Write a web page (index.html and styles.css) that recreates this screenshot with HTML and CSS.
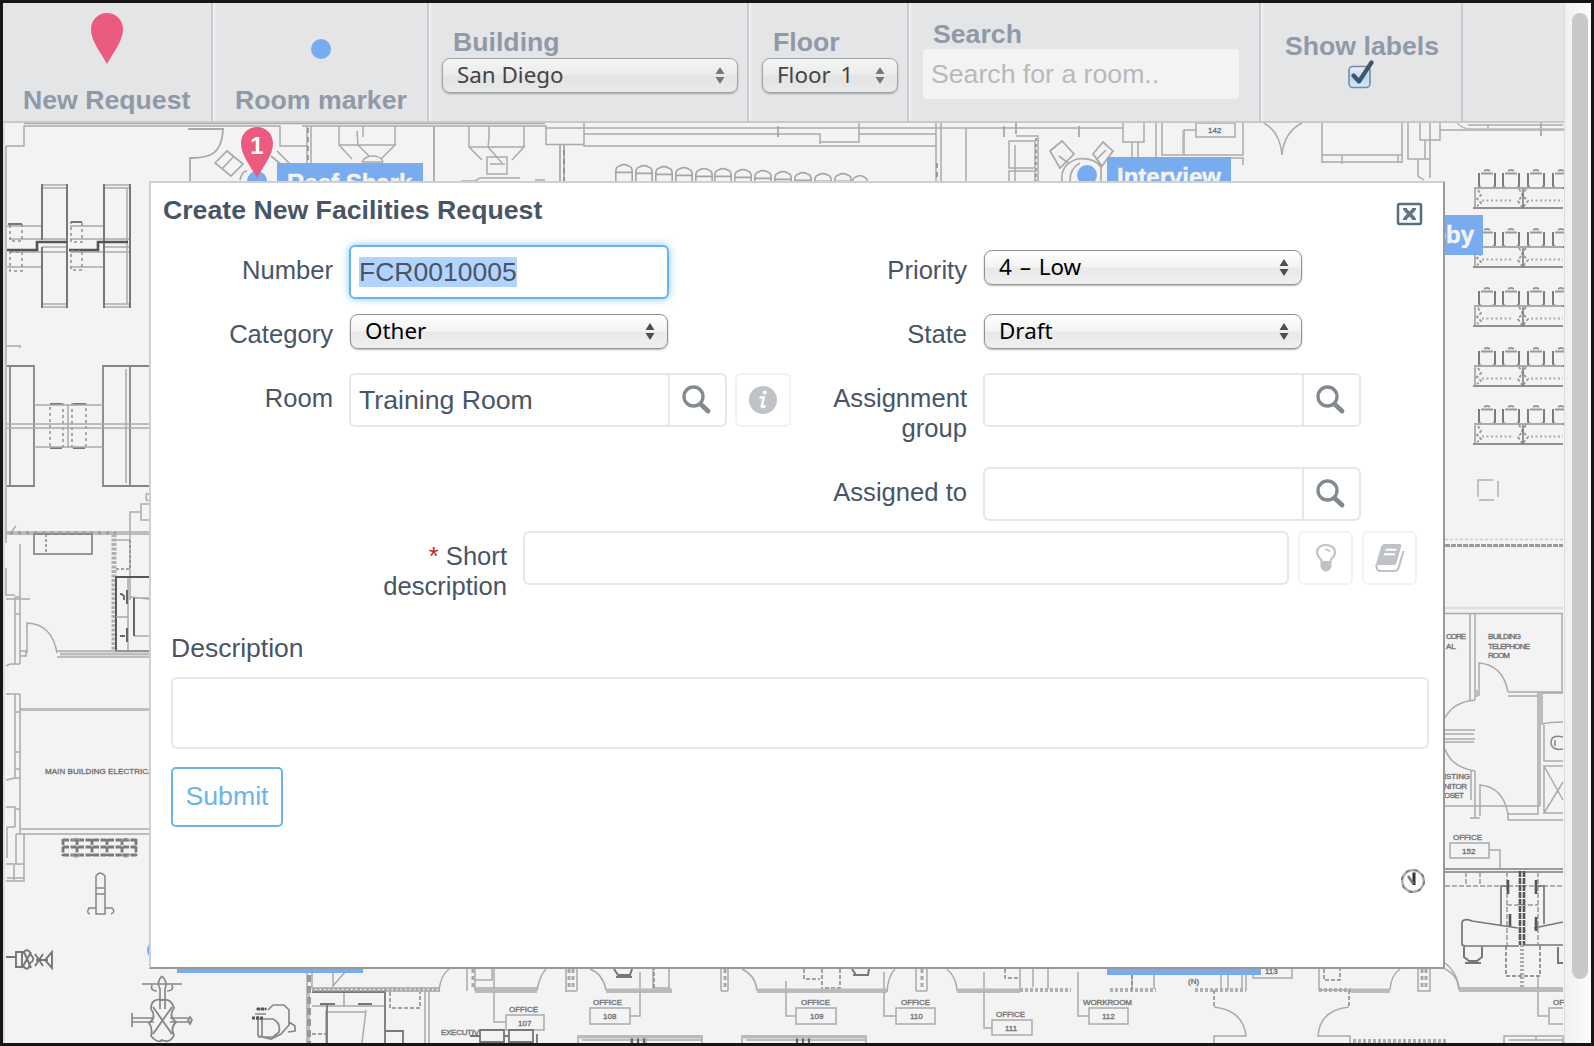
FILE: index.html
```html
<!DOCTYPE html>
<html lang="en">
<head>
<meta charset="utf-8">
<title>Facilities Map</title>
<link rel="stylesheet" href="styles.css">
</head>
<body>
<svg class="defs" width="0" height="0">
  <defs>
    <symbol id="pin" viewBox="0 0 32 51"><path d="M16 0C25 0 32 7 32 16.500C32 28 22 40 16 51C10 40 0 28 0 16.500C0 7 7 0 16 0Z" fill="#ea5b7f"/></symbol>
    <symbol id="arrows" viewBox="0 0 10 17"><path d="M5 0L9.500 7H.5ZM5 17L.5 10H9.500Z" fill="currentColor"/></symbol>
    <symbol id="search" viewBox="0 0 30 30"><circle cx="11.500" cy="11.500" r="9.500" fill="none" stroke="#828990" stroke-width="3.300"/><path d="M19 19.500L26 26" stroke="#828990" stroke-width="4.800" stroke-linecap="round"/></symbol>
    <symbol id="seat" viewBox="0 0 18 20" overflow="visible"><path d="M1 4V16Q1 19 4 19H14Q17 19 17 16V4" fill="none" stroke="#7c7c7c" stroke-width="2"/><path d="M3 4.500H15M6 2Q9 0 12 2" fill="none" stroke="#999" stroke-width="1.800"/></symbol>
    <symbol id="row" viewBox="0 0 90 42" overflow="visible">
      <use href="#seat" x="5" y="0" width="18" height="20"/><use href="#seat" x="29" y="0" width="18" height="20"/><use href="#seat" x="54" y="0" width="18" height="20"/><use href="#seat" x="79" y="0" width="18" height="20"/>
      <path d="M90 19H2V39" fill="none" stroke="#aaa" stroke-width="1.800"/><path d="M0 39H90" stroke="#909090" stroke-width="2.200"/>
      <path d="M9 31.500H40M58 31.500H90" stroke="#aaa" stroke-width="2" stroke-dasharray="2 2.500"/>
      <path d="M5 21L8 26L4 30L8 34L4 37M46 20L50 26L45 32L49 38M53 20L49 26L55 32L50 38" fill="none" stroke="#999" stroke-width="1.800" stroke-dasharray="3 2"/><path d="M50 20V39" stroke="#777" stroke-width="1.500"/>
    </symbol>
    <symbol id="roundseat" viewBox="0 0 22 26" overflow="visible"><path d="M2 25V8Q2 3 6 2Q11 -1 16 2Q20 3 20 8V25M2 9H20" fill="none" stroke="#a5a5a5" stroke-width="1.800"/></symbol>
  </defs>
</svg>
<div class="window">
  <div class="page">
    <header class="toolbar">
      <div class="cell cell-request"><svg class="pin" width="32" height="51"><use href="#pin"/></svg><span>New Request</span></div>
      <div class="cell cell-marker"><i class="dot"></i><span>Room marker</span></div>
      <div class="cell cell-building"><span>Building</span><div class="select"><b>San Diego</b><svg width="10" height="17"><use href="#arrows"/></svg></div></div>
      <div class="cell cell-floor"><span>Floor</span><div class="select"><b>Floor 1</b><svg width="10" height="17"><use href="#arrows"/></svg></div></div>
      <div class="cell cell-search"><span>Search</span><div class="searchbox">Search for a room..</div></div>
      <div class="cell cell-labels"><span>Show labels</span>
        <svg class="check" width="28" height="30" viewBox="0 0 28 30"><defs><linearGradient id="cb" x2="0" y2="1"><stop stop-color="#eaf2f9"/><stop offset=".5" stop-color="#b8d8f2"/><stop offset="1" stop-color="#cfeafc"/></linearGradient></defs><rect x="2" y="6.500" width="21" height="21" rx="4" fill="url(#cb)" stroke="#7d8a9b" stroke-width="1.600"/><path d="M6.500 15.500L12 21.500L24.500 2.500" fill="none" stroke="#42546a" stroke-width="4.200" stroke-linecap="round" stroke-linejoin="round"/></svg>
      </div>
    </header>
    <main class="map">
      <svg class="plan" viewBox="3 123 1561 920" width="1561" height="920">
        <rect x="3" y="123" width="2" height="920" fill="#dedede"/>
        <g fill="none" stroke="#aaa" stroke-width="1.500">
          <!-- north wall -->
          <path d="M6 146H24V126H280V146H307M24 123.500H545M545 128H936V146H584V129M302 126H546V144.500H584V123M584 134H820V144M820 142H859V123M859 134H936M936 123V181M941 123V181M966 128V181M936 128H1005M859 128H936"/>
          <path d="M307 126V181M311 126V181M339 126V145L352 159M339 145H395L381 159M395 126V145M357 131L358 145L369 156M363 126V137M469 126V147L482 160M469 147H524L512 160M524 126V147M489 126V139L488 147L502 163"/>
          <path d="M188 129H223Q222 150 210 155Q203 158 190 158V181M434 126V181M560 144V181M564 144V181" stroke-width="1.800"/>
          <path d="M362 162Q365 156 373 156Q381 156 383 162M362 162H383M487 157H507V174H487ZM490 164H505M461 181H475L480 178H520M535 180H545"/>
          <path d="M215 163L227 151L243 164L231 176ZM222 169L234 156M271 156L288 170M277 151L290 164M240 180Q242 171 247 171" stroke-width="1.700"/>
          <path d="M308 128V181M564 150V181M937 163V181" stroke="#888" stroke-dasharray="5 4"/>
          <path d="M778 126V137M1004 126V137M1079 126V137M1016 123V134M1541 123V136" stroke="#999"/>
          <path d="M1009 141H1035V168H1009ZM1009 181V171H1035V181M1016 136H1038V181M1015 145V181"/>
          <path d="M1036 138V181" stroke-dasharray="3 3" stroke="#888"/>
          <path d="M1050 151L1062 141L1074 154L1060 168ZM1093 154L1103 142L1113 151L1102 166ZM1059 156L1068 163M1096 160L1106 150M1062 181Q1060 165 1077 159Q1094 157 1101 167V181M1070 181Q1070 168 1080 163" stroke-width="1.700"/>
          <path d="M1005 128H1123V142H1144V123M1123 123V142M1132 142V158M1138 142V158M1156 123V157M1162 123V155H1243V123M1162 158H1243V165M1184 155V130H1196M1196 123H1235V137H1196ZM1264 123Q1280 132 1282 155Q1284 132 1302 123M1322 123V163M1322 155H1402V163M1322 162H1402M1342 156V164M1398 156V162M1402 123V155M1408 123V159H1430V123M1420 123V140H1440V130H1564M1440 123V140M1430 140V178M1425 140V159M1418 160V176L1424 180M1468 125H1563M1488 125V131"/>
          <path d="M1183 130V155M1457 123Q1462 128 1468 129H1564" stroke="#bbb"/>
          <!-- upper west desks -->
          <path d="M6 146V543M7 226H42M7 267H42M70 226H104M70 267H104M9 239H67M9 252H67M70 239H129M70 252H129M42 185H67M42 188H67M42 307H67M42 304H67M104 185H129M104 188H129M104 304H129M104 307H129M127 188V305M6 346H20V348M42 247H67M104 247H129"/>
          <path d="M42 184V240M42 247V308M67 184V308M104 184V308M130 184V308" stroke="#777" stroke-width="2"/>
          <path d="M7 250H37V242H67M69 250H98V242H128" stroke="#555" stroke-width="2.600"/>
          <path d="M10 224H22V241H10ZM10 252H22V271H10ZM71 222H82V242H71ZM71 251H82V270H71ZM50 404H63V448H50ZM72 404H86V448H72Z" stroke="#909090" stroke-dasharray="3 3"/>
          <path d="M8 224H22M71 222H82M50 404H62M73 404H85M50 448H62M73 448H85" stroke="#777" stroke-width="2"/>
          <path d="M7 366H34V486H7M149 366H103V486H149M10 366V486M130 366V486" stroke="#858585" stroke-width="1.800"/>
          <path d="M7 424H149M7 428H149M34 405H103M34 447H103M126 369V483M68 404V448" />
          <path d="M149 504H141V520H149M130 600V512H141M6 532H149M6 534H149M20 544V664M116 540H130V570M12 531L16 526" />
          <path d="M149 495Q146 491 146 497Q146 502 149 500" />
          <path d="M34 534H92V554H34Z" stroke="#777"/><path d="M46 534V554M130 540V569H116" stroke="#888" stroke-dasharray="3 2"/>
          <path d="M10 533H116" stroke="#999" stroke-width="3" stroke-dasharray="3 5"/>
          <path d="M114 534V651" stroke="#b0b0b0" stroke-width="5" stroke-dasharray="3 1.500"/>
          <path d="M149 577H116V651H149" stroke="#555" stroke-width="1.900"/><path d="M128 578V650M116 617H128M134 598H149M134 636H149M130 597L149 599"/>
          <path d="M134 598V636M127 590V604M127 628V642M120 594Q125 594 124 600M120 636H125" stroke="#666" stroke-width="2"/>
          <path d="M27 653V623Q52 624 57 653M20 651H26V656H20M57 651H149M57 657H149M6 568V595H15M15 597V664M15 597H20M6 599H30M15 614H20M6 666L10 664H20"/>
          <path d="M60 654H149M20 709.500H149" stroke="#bdbdbd" stroke-width="3"/>
          <path d="M6 694H20M15 694V778M20 694V834M15 712H20M15 752H20M15 769H20M6 780L15 778H20M6 807H15V827M15 809H20M7 827H15M7 827V858M20 829H149M16 834H149M16 834V864M24 834V881H6M6 864H24M14 865V880M7 878H24"/>
          <path d="M63 840H137M63 847H137M63 855H137M63 839V856M77 839V856M92 839V856M107 839V856M122 839V856M136 839V856" stroke="#7a7a7a" stroke-width="2.800" stroke-dasharray="6 1.500"/>
          <path d="M72 841Q76 836 80 841M121 841Q126 836 130 841M72 854Q76 860 80 854M121 854Q126 860 130 854" stroke="#999"/>
          <path d="M96 913V875Q100 869 105 875V913ZM96 887H105M96 893H105M96 907H89Q86 912 90 913M105 907H112Q116 911 111 913" stroke="#888" transform="translate(0 1)"/>
          <path d="M6 955H16M16 950H22V965H16ZM22 952Q28 944 31 953Q36 958 30 961Q28 972 22 962ZM24 950L31 966M31 950L22 966M35 952L43 964M43 952L35 964M45 958L52 950V966L45 958M36 958H48" stroke="#777" stroke-width="1.900" transform="translate(0 2)"/>
          <!-- classroom -->
          <use href="#row" x="1473" y="169" width="90" height="42"/><use href="#row" x="1473" y="228" width="90" height="42"/><use href="#row" x="1473" y="287" width="90" height="42"/><use href="#row" x="1473" y="347" width="90" height="42"/><use href="#row" x="1473" y="405" width="90" height="42"/>
          <path d="M1478 497V480H1493M1498 481V497M1479 500H1494" stroke="#b0b0b0"/>
          <path d="M1445 539.500H1563" stroke="#ccc" stroke-dasharray="3 2"/><path d="M1445 545.500H1563" stroke="#999" stroke-width="3" stroke-dasharray="5 1"/>
          <!-- east rooms -->
          <path d="M1445 608H1563" stroke="#ddd" stroke-width="2.500"/>
          <path d="M1445 613.500H1563M1562 614V692M1470 614V700M1475 614V700M1479 696V663Q1503 665 1508 692M1508 692H1563M1508 696H1538M1477 690V697M1445 718Q1453 702 1475 700M1445 730H1475M1445 734H1474M1445 739H1475M1445 742H1474M1445 749Q1451 767 1475 771M1471 771V800M1475 771V818M1480 816V785Q1503 787 1508 814M1508 814H1538V692M1540 692V806M1445 806H1540M1508 820H1563M1470 818H1480M1508 814V820M1542 693H1563M1542 693V724Q1550 722 1563 722M1544 725V761H1563M1563 766H1544L1563 800M1563 782L1544 813H1563M1544 766V813"/>
          <path d="M1563 737Q1551 734 1551 743Q1552 751 1563 749M1555 740V746" stroke="#888"/>
          <path d="M1450 843H1489V858H1450ZM1489 850H1500V868"/>
          <path d="M1445 869H1563M1445 872H1563" stroke="#999" stroke-width="1.900"/>
          <path d="M1445 872H1518M1445 886H1563M1466 872V886M1480 872V886M1507 872V945M1538 872V945M1507 905H1538" stroke="#999" stroke-dasharray="5 2"/>
          <path d="M1520 871V945M1524 871V945" stroke="#555" stroke-width="2.600" stroke-dasharray="6 1"/>
          <path d="M1522 945V990" stroke="#aaa" stroke-width="4" stroke-dasharray="2 2"/>
          <path d="M1507 886H1501V925M1462 922V944Q1462 946 1466 946H1519M1462 922Q1464 918 1472 921L1518 928M1538 886H1544V924M1524 945H1563M1534 928L1563 922" stroke="#777" stroke-width="1.700"/>
          <path d="M1508 880V894M1510 914V926M1536 880V894M1536 917V931" stroke="#555" stroke-width="2.600"/>
          <path d="M1464 947V957L1469 961H1477L1482 957V947M1465 963H1481M1558 947V963H1563" stroke="#777" stroke-width="2"/>
          <path d="M1506 946V976H1540V946" stroke="#777" stroke-dasharray="4 2"/>
          <path d="M1445 963Q1458 973 1459 990M1459 988H1563M1459 991H1563M1538 977V1016H1549M1563 1008H1549V1024H1563M1504 1043V1036H1563V1043M1509 1040H1563M1536 1036V1041"/>
          <!-- south equipment -->
          <path d="M142 984H182M162 976Q156 982 160 989V1009M162 976Q168 982 165 989V1009M152 985Q150 991 157 991M172 985Q174 991 167 991M132 1013V1027M132 1018H154M132 1022H154M170 1018H188M170 1022H188" stroke="#888" stroke-width="1.700"/>
          <path d="M162 1000Q151 998 151 1009Q157 1017 149 1023Q153 1028 151 1036Q158 1044 162 1040Q170 1044 174 1035Q170 1028 176 1022Q168 1016 174 1008Q171 998 162 1000ZM153 1007L172 1034M172 1007L153 1034M190 1017L192 1020L190 1024L188 1020Z" stroke="#858585" stroke-width="1.800"/>
          <path d="M268 1010L273 1005H284L289 1010V1025L281 1034L271 1039L258 1036M258 1016V1036M262 1019V1037M256 1019H273Q281 1023 279 1032L273 1037H258M289 1022L295 1026V1031L288 1032M256 1009H267M255 1014H266" stroke="#888" stroke-width="1.700"/>
          <path d="M257 1009H266M252 1018H264" stroke="#555" stroke-width="3" stroke-dasharray="3 1"/>
          <path d="M307 972V1043M312 972V988H439M312 991H440M333 972V986L345 972M309 993V1043M425 991V1043M429 991V1043M344 992V1006M312 1006H385M326 1010V1043M366 1010L362 1043M326 1012H365"/>
          <path d="M309 975V1043" stroke="#999" stroke-width="4" stroke-dasharray="7 4"/>
          <path d="M312 992H385V1043M320 1004H335M358 1004H372M327 1005V1043M385 1031H403V1043" stroke="#777" stroke-width="1.800"/>
          <path d="M312 989.500H440" stroke="#aaa" stroke-width="4" stroke-dasharray="3 1.500"/><path d="M390 992V1008H420V992M312 1034H326" stroke="#888" stroke-dasharray="4 2"/>
          <path d="M439 990Q441 975 449 969M467 969V991M475 969V991M475 988H537M475 992H537M537 990Q540 975 546 969M494 969V1022H506M475 980H492V969"/>
          <path d="M506 1015H544V1030H506ZM566 969V991M577 969V991M565 991H577M590 969Q603 974 606 990H653M606 992H672M640 972V1016H630M590 1008H630V1024H590ZM653 969V988H669M669 969V990M721 969V991M728 969V991M721 991H728M742 969Q755 975 757 990H887M757 992H887M786 981V1016H796M796 1008H836V1024H796ZM887 992Q888 976 895 969M884 972V1016H896M896 1008H935V1024H896ZM916 969V991M927 969V991M916 991H927M947 969Q956 977 957 990H1020M957 992H1020M984 972V1028H992M992 1020H1032V1035H992ZM1020 969V991M1033 969V987M1048 969V989M1078 972V1016H1089M1089 1008H1128V1024H1089ZM1132 969V989M1154 969V989M1253 969V978H1292V969M1221 969V990M1228 969V990M1242 969V991M1246 969V991"/>
          <path d="M473 969V990M569 969V990M573 969V990M725 969V990M922 969V990M1422 969V990M1426 969V990" stroke="#aaa" stroke-width="3" stroke-dasharray="4 3"/>
          <path d="M1020 990H1071M1110 990H1156M1195 990H1246M1319 990H1351M1353 1041H1448" stroke="#b0b0b0" stroke-width="4" stroke-dasharray="3 2"/>
          <path d="M804 969V979H820M822 969V991M840 969V988H824M1005 969V978H1020M654 988V969M1324 969V980H1340V969M1132 969V990M1214 990V1007M1349 990V1007" stroke="#888" stroke-dasharray="4 2"/>
          <path d="M614 969L618 975H630L632 969M616 977H632M852 969L856 975H868L869 969M853 975H868" stroke="#777" stroke-width="2"/>
          <path d="M1214 1007Q1243 1010 1246 1036H1214V1043M1349 1007Q1320 1010 1318 1036H1350V1043M1319 969V990H1390M1351 992H1390M1390 990Q1391 975 1400 969M1418 969V991H1430V969M1445 969Q1458 975 1459 990M578 1043V1036H702V1043M582 1040H702M742 1043V1036H866V1043M746 1040H866M631 1036V1043M646 1036V1043"/>
          <path d="M632 1037V1043M638 1037V1043M644 1037V1043M797 1037V1043M803 1037V1043M809 1037V1043" stroke="#666" stroke-width="2.200"/>
          <path d="M475 990H537M606 990H672M757 990H887M957 990H1020M1351 990H1390M1459 990H1563M578 1037H702M742 1037H866" stroke="#bababa" stroke-width="3"/>
          <path d="M480 1030H504V1042H480ZM509 1030H533V1042H509ZM470 1036H480M504 1036H509M537 1034V1043" stroke="#777" stroke-width="1.800"/>
        </g>
        <g>
          <use href="#roundseat" x="614" y="164" width="20" height="24"/><use href="#roundseat" x="634" y="165" width="20" height="24"/><use href="#roundseat" x="654" y="166" width="20" height="24"/><use href="#roundseat" x="674" y="167" width="20" height="24"/><use href="#roundseat" x="694" y="168" width="20" height="24"/><use href="#roundseat" x="713" y="168" width="20" height="24"/><use href="#roundseat" x="733" y="169" width="20" height="24"/><use href="#roundseat" x="753" y="170" width="20" height="24"/><use href="#roundseat" x="773" y="171" width="20" height="24"/><use href="#roundseat" x="793" y="172" width="20" height="24"/><use href="#roundseat" x="813" y="173" width="20" height="24"/><use href="#roundseat" x="833" y="173" width="20" height="24"/><use href="#roundseat" x="851" y="174" width="18" height="24"/>
        </g>
        <g class="plan-text">
          <text x="45" y="774" textLength="113">MAIN BUILDING ELECTRICAL</text>
          <text x="1208" y="133">142</text>
          <text x="1446" y="639" textLength="20">CORE</text><text x="1446" y="649">AL</text>
          <text x="1488" y="639" textLength="33">BUILDING</text><text x="1488" y="649" textLength="42">TELEPHONE</text><text x="1488" y="658" textLength="22">ROOM</text>
          <text x="1444" y="779" textLength="26">ISTING</text><text x="1444" y="789" textLength="23">NITOR</text><text x="1444" y="798" textLength="20">OSET</text>
          <text x="1453" y="840" textLength="29">OFFICE</text><text x="1462" y="854">152</text><text x="1553" y="1005">OF</text>
          <text x="509" y="1012" textLength="29">OFFICE</text><text x="518" y="1026">107</text>
          <text x="593" y="1005" textLength="29">OFFICE</text><text x="603" y="1019">108</text>
          <text x="801" y="1005" textLength="29">OFFICE</text><text x="810" y="1019">109</text>
          <text x="901" y="1005" textLength="29">OFFICE</text><text x="910" y="1019">110</text>
          <text x="996" y="1017" textLength="29">OFFICE</text><text x="1005" y="1031">111</text>
          <text x="1083" y="1005" textLength="49">WORKROOM</text><text x="1102" y="1019">112</text>
          <text x="1265" y="974">113</text><text x="1188" y="984">(N)</text><text x="441" y="1035" textLength="38">EXECUTIV</text>
        </g>
      </svg>
      <i class="dot room-a"></i><i class="dot room-b"></i><i class="dot room-c"></i>
      <span class="tag tag-reef">Reef Shark</span>
      <span class="tag tag-interview">Interview</span>
      <span class="tag tag-lobby">Lobby</span>
      <i class="tag tag-south"></i><i class="tag tag-east"></i>
      <div class="pin-one"><svg width="32" height="51"><use href="#pin"/></svg><b>1</b></div>
    </main>
    <section class="dialog">
      <div class="dialog-head"><h1>Create New Facilities Request</h1>
        <svg width="27" height="24" viewBox="0 0 27 24"><rect x="2" y="2" width="23" height="20" rx="1.500" fill="#fafcfd" stroke="#566f82" stroke-width="2.500"/><path d="M9 7.500L18 16.500M18 7.500L9 16.500" stroke="#5f7484" stroke-width="3.600"/><path d="M7 7H11M16 7H20M7 17H11M16 17H20" stroke="#5f7484" stroke-width="1.800"/></svg>
      </div>
      <div class="columns">
        <div class="col-left">
          <div class="field"><label>Number</label><div class="input focused"><mark>FCR0010005</mark></div></div>
          <div class="field"><label>Category</label><div class="select"><b>Other</b><svg width="10" height="17"><use href="#arrows"/></svg></div></div>
          <div class="field"><label>Room</label><div class="input lookup"><span>Training Room</span><div class="look"><svg width="30" height="30"><use href="#search"/></svg></div></div>
            <div class="button"><svg width="28" height="28" viewBox="0 0 28 28"><circle cx="14" cy="14" r="14" fill="#bfc2c7"/><path d="M10.500 11.500H14.800L12.800 20Q12.600 22 16.500 20" fill="none" stroke="#fff" stroke-width="2.600"/><circle cx="15.700" cy="6.500" r="2" fill="#fff"/></svg></div></div>
        </div>
        <div class="col-right">
          <div class="field"><label>Priority</label><div class="select spaced"><b>4 – Low</b><svg width="10" height="17"><use href="#arrows"/></svg></div></div>
          <div class="field"><label>State</label><div class="select"><b>Draft</b><svg width="10" height="17"><use href="#arrows"/></svg></div></div>
          <div class="field tall"><label>Assignment group</label><div class="input lookup"><span></span><div class="look"><svg width="30" height="30"><use href="#search"/></svg></div></div></div>
          <div class="field"><label>Assigned to</label><div class="input lookup"><span></span><div class="look"><svg width="30" height="30"><use href="#search"/></svg></div></div></div>
        </div>
      </div>
      <div class="field short"><label><em>*</em> Short description</label><div class="input"></div>
        <div class="button"><svg width="22" height="30" viewBox="0 0 22 30"><path d="M7 19Q6 16 3.500 13.500C-1 7 5 2 11 2S23 7 18.500 13.500Q16 16 15 19Z" fill="none" stroke="#bfc2c7" stroke-width="2.200"/><path d="M5.500 18.500H16.500V24Q15 28 11 28.500Q7 28 5.500 24Z" fill="#bfc2c7"/><path d="M10 6.500Q14 6.500 14.500 9" fill="none" stroke="#bfc2c7" stroke-width="1.500"/></svg></div>
        <div class="button"><svg width="30" height="30" viewBox="0 0 30 30"><path d="M9 1H24Q27 1 26 4L21.500 20Q21 22 19 22H4Q1 22 1.500 19L6 4Q7 1 9 1Z" fill="#bfc2c7"/><path d="M10.500 6.700H21.500M9 11.200H20" stroke="#fff" stroke-width="2"/><path d="M1.500 21Q1 28 5 28H19.500Q22.500 28 23.500 25L28.500 8" fill="none" stroke="#bfc2c7" stroke-width="2.200"/></svg></div>
      </div>
      <div class="description"><label>Description</label><div class="textarea"></div></div>
      <div class="submit">Submit</div>
      <svg class="clock" width="26" height="26" viewBox="0 0 26 26"><circle cx="13" cy="13" r="10.800" fill="#fafafa" stroke="#aaa" stroke-width="2.200"/><circle cx="13" cy="13" r="11.300" fill="none" stroke="#777" stroke-width="1.500" stroke-dasharray="4 5"/><path d="M14 4.500V17" stroke="#333" stroke-width="3"/><path d="M8 8L13.500 16" stroke="#777" stroke-width="2.600"/></svg>
    </section>
  </div>
  <div class="scrollbar"><div class="thumb"></div></div>
</div>
</body>
</html>
```
FILE: styles.css
```css
* { box-sizing: border-box; }
body { margin: 0; background: #161616; font-family: "Liberation Sans", Arial, sans-serif; font-size: 26.67px; color: #485566; }
svg { display: block; flex: none; }
.defs { position: absolute; }
.window { display: flex; width: 1594px; height: 1046px; padding: 3px; background: #161616; overflow: hidden; }
.page { position: relative; width: 1561px; height: 1040px; flex: none; background: #f3f3f3; overflow: hidden; }
.scrollbar { width: 27px; height: 1040px; padding: 10px 4px 0 7px; border-left: 1px solid #ddd; background: linear-gradient(90deg, #f0f0f0, #fcfcfc); }
.thumb { width: 16px; height: 966px; border-radius: 8px; background: #c8c8c8; }

.toolbar { display: flex; height: 120px; background: #e3e5e7; border-bottom: 2px solid #c8c9cb; font-weight: bold; color: #9099a7; line-height: 30px; }
.cell { display: flex; flex-direction: column; flex: none; border-right: 2px solid #c8c9cc; border-left: 2px solid #f1f2f3; white-space: nowrap; }
.cell-request { width: 210px; border-left: 0; padding-left: 20px; }
.cell-request .pin { margin: 10px 0 21px 68px; }
.cell-marker { width: 216px; padding: 36px 0 0 20px; }
.dot { width: 20px; height: 20px; flex: none; border-radius: 50%; background: #79abef; }
.cell-marker .dot { margin: 0 0 26px 76px; }
.cell-building { width: 320px; padding: 24px 0 0 11px; }
.cell-floor { width: 160px; padding: 24px 0 0 11px; }
.cell-building > span, .cell-floor > span { padding-left: 11px; }
.cell-search { width: 352px; padding: 16px 0 0 12px; }
.cell-search > span { padding-left: 10px; }
.cell-labels { width: 202px; padding: 28px 0 0 22px; }
.check { margin: -1px 0 0 62px; }
.searchbox { width: 316px; height: 50px; padding: 10px 8px; border-radius: 4px; background: #f3f3f3; font-weight: normal; color: #b9b9b9; }
.select { display: flex; justify-content: space-between; align-items: center; height: 35px; padding: 0 12px 1px 14px; border: 1.500px solid #929292; border-radius: 8px; background: linear-gradient(#fff, #f3f3f3 48%, #e9e9e9 52%, #efefef); box-shadow: 0 1px 2px rgba(0,0,0,.3); color: #4e4e4e; }
.select b { font: 22.4px/30px "Noto Sans", sans-serif; color: #000; }
.toolbar .select { margin-top: 1px; background: linear-gradient(#f5f5f5, #ebebeb 48%, #e3e3e3 52%, #e9e9e9); border-color: #a2a4a6; color: #777; }
.toolbar .select b { color: #444; }
.cell-building .select { width: 296px; }
.cell-floor .select { width: 136px; word-spacing: 4px; }
.spaced { word-spacing: 2px; }

.map { position: relative; height: 920px; overflow: hidden; }
.plan-text { font-family: "Liberation Sans", sans-serif; font-size: 8px; fill: #6c6c6c; stroke: #777; stroke-width: .35; }
.map > .dot, .tag, .pin-one { position: absolute; }
.room-a { left: 244px; top: 48px; }
.room-b { left: 1074px; top: 42px; }
.room-c { left: 144px; top: 817px; }
.tag { height: 40px; padding: 0 11px; background: #79abef; color: #f3f3f3; font: bold 24px/40px "Liberation Sans", sans-serif; white-space: nowrap; -webkit-text-stroke: .5px #f3f3f3; }
.tag-reef { left: 274px; top: 40px; width: 146px; padding: 0 0 0 10px; }
.tag-interview { left: 1104px; top: 34px; width: 124px; padding-left: 10px; }
.tag-lobby { right: 81px; top: 92px; padding-right: 9px; }
.tag-south { left: 174px; top: 810px; width: 186px; }
.tag-east { left: 1104px; top: 812px; width: 154px; }
.pin-one { left: 238px; top: 4px; width: 32px; }
.pin-one b { position: absolute; left: 0; top: 5px; width: 32px; text-align: center; color: #fff; font-size: 24px; line-height: 28px; }

.dialog { position: absolute; left: 146px; top: 178px; width: 1296px; height: 788px; border: 2px solid; border-color: #d0d0d0 #999 #999 #d0d0d0; background: #fff; }
.dialog-head { display: flex; justify-content: space-between; height: 62px; padding: 12px 20px 0 12px; }
.dialog-head svg { margin-top: 7px; }
h1 { margin: 0; font-size: 26.67px; line-height: 30px; }
.columns { display: flex; height: 286px; }
.col-left { width: 634px; flex: none; }
.field { display: flex; height: 64px; }
.field.tall { height: 94px; }
label { width: 182px; flex: none; margin-right: 16px; padding-top: 10px; text-align: right; font-size: 25.6px; line-height: 30px; }
.input { width: 320px; height: 54px; flex: none; padding: 10px 8px; border: 2px solid #e6e7e9; border-radius: 6px; line-height: 30px; background: #fff; }
.focused { font-size: 26.5px; border-color: #66b4f1; box-shadow: 0 0 9px rgba(102,180,241,.75); }
mark { display: inline-block; height: 30px; background: #b3d3ff; color: inherit; }
.field .select { width: 318px; margin: 5px 0 0 1px; }
.lookup { display: flex; width: 378px; padding: 0; }
.lookup span { width: 317px; flex: none; padding: 10px 8px; }
.look { width: 57px; flex: none; padding: 10px 0 0 12px; border-left: 2px solid #e6e7e9; }
.button { display: flex; align-items: center; justify-content: center; flex: none; width: 56px; height: 54px; margin-left: 8px; border: 2px solid #f2f2f3; border-radius: 6px; }
.short label { width: 356px; padding-left: 200px; }
.short .input { width: 766px; }
.short .button { width: 55px; margin-left: 9px; }
.short { height: 98px; }
.description { padding-left: 20px; }
.description label { display: block; width: auto; margin: 0 0 14px; padding: 4px 0 0; text-align: left; font-size: 26.5px; }
.textarea { width: 1258px; height: 72px; border: 2px solid #e6e7e9; border-radius: 6px; }
.submit { width: 112px; height: 60px; margin: 18px 0 0 20px; padding: 11px 0; border: 2px solid #6ab4ee; border-radius: 5px; text-align: center; line-height: 32px; color: #6ab4ee; }
em { color: #c22; font-style: normal; }
.clock { margin: 41px 0 0 1249px; }
```
